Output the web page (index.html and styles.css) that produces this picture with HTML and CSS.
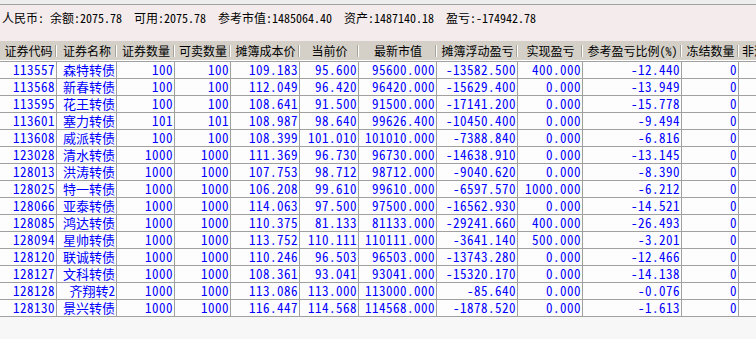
FILE: index.html
```html
<!DOCTYPE html>
<html lang="zh-CN">
<head>
<meta charset="utf-8">
<title>资金持仓</title>
<link rel="stylesheet" href="styles.css">
</head>
<body>
<div class="app">
  <div class="strip"></div>
  <div class="summary">人民币: 余额:2075.78  可用:2075.78  参考市值:1485064.40  资产:1487140.18  盈亏:-174942.78</div>
  <table class="grid">
    <colgroup>
      <col class="w57"><col class="w60"><col class="w58"><col class="w56"><col class="w69"><col class="w59"><col class="w78"><col class="w81"><col class="w65"><col class="w99"><col class="w57"><col class="w66">
    </colgroup>
    <thead>
      <tr><th>证券代码</th><th>证券名称</th><th>证券数量</th><th>可卖数量</th><th>摊簿成本价</th><th>当前价</th><th>最新市值</th><th>摊簿浮动盈亏</th><th>实现盈亏</th><th>参考盈亏比例(%)</th><th>冻结数量</th><th class="last">非流通数量</th></tr>
    </thead>
    <tbody>
      <tr><td>113557</td><td class="nm">森特转债</td><td>100</td><td>100</td><td>109.183</td><td>95.600</td><td>95600.000</td><td>-13582.500</td><td>400.000</td><td>-12.440</td><td>0</td><td></td></tr>
      <tr><td>113568</td><td class="nm">新春转债</td><td>100</td><td>100</td><td>112.049</td><td>96.420</td><td>96420.000</td><td>-15629.400</td><td>0.000</td><td>-13.949</td><td>0</td><td></td></tr>
      <tr><td>113595</td><td class="nm">花王转债</td><td>100</td><td>100</td><td>108.641</td><td>91.500</td><td>91500.000</td><td>-17141.200</td><td>0.000</td><td>-15.778</td><td>0</td><td></td></tr>
      <tr><td>113601</td><td class="nm">塞力转债</td><td>101</td><td>101</td><td>108.987</td><td>98.640</td><td>99626.400</td><td>-10450.400</td><td>0.000</td><td>-9.494</td><td>0</td><td></td></tr>
      <tr><td>113608</td><td class="nm">威派转债</td><td>100</td><td>100</td><td>108.399</td><td>101.010</td><td>101010.000</td><td>-7388.840</td><td>0.000</td><td>-6.816</td><td>0</td><td></td></tr>
      <tr><td>123028</td><td class="nm">清水转债</td><td>1000</td><td>1000</td><td>111.369</td><td>96.730</td><td>96730.000</td><td>-14638.910</td><td>0.000</td><td>-13.145</td><td>0</td><td></td></tr>
      <tr><td>128013</td><td class="nm">洪涛转债</td><td>1000</td><td>1000</td><td>107.753</td><td>98.712</td><td>98712.000</td><td>-9040.620</td><td>0.000</td><td>-8.390</td><td>0</td><td></td></tr>
      <tr><td>128025</td><td class="nm">特一转债</td><td>1000</td><td>1000</td><td>106.208</td><td>99.610</td><td>99610.000</td><td>-6597.570</td><td>1000.000</td><td>-6.212</td><td>0</td><td></td></tr>
      <tr><td>128066</td><td class="nm">亚泰转债</td><td>1000</td><td>1000</td><td>114.063</td><td>97.500</td><td>97500.000</td><td>-16562.930</td><td>0.000</td><td>-14.521</td><td>0</td><td></td></tr>
      <tr><td>128085</td><td class="nm">鸿达转债</td><td>1000</td><td>1000</td><td>110.375</td><td>81.133</td><td>81133.000</td><td>-29241.660</td><td>400.000</td><td>-26.493</td><td>0</td><td></td></tr>
      <tr><td>128094</td><td class="nm">星帅转债</td><td>1000</td><td>1000</td><td>113.752</td><td>110.111</td><td>110111.000</td><td>-3641.140</td><td>500.000</td><td>-3.201</td><td>0</td><td></td></tr>
      <tr><td>128120</td><td class="nm">联诚转债</td><td>1000</td><td>1000</td><td>110.246</td><td>96.503</td><td>96503.000</td><td>-13743.280</td><td>0.000</td><td>-12.466</td><td>0</td><td></td></tr>
      <tr><td>128127</td><td class="nm">文科转债</td><td>1000</td><td>1000</td><td>108.361</td><td>93.041</td><td>93041.000</td><td>-15320.170</td><td>0.000</td><td>-14.138</td><td>0</td><td></td></tr>
      <tr><td>128128</td><td class="nm">齐翔转2</td><td>1000</td><td>1000</td><td>113.086</td><td>113.000</td><td>113000.000</td><td>-85.640</td><td>0.000</td><td>-0.076</td><td>0</td><td></td></tr>
      <tr><td>128130</td><td class="nm">景兴转债</td><td>1000</td><td>1000</td><td>116.447</td><td>114.568</td><td>114568.000</td><td>-1878.520</td><td>0.000</td><td>-1.613</td><td>0</td><td></td></tr>
    </tbody>
  </table>
</div>
</body>
</html>
```

FILE: styles.css
```css
html, body {
  margin: 0;
  padding: 0;
}
body {
  background: #f7f7f7;
  overflow: hidden;
  font-family: "Noto Sans Mono CJK SC", "Noto Sans CJK SC", "DejaVu Sans Mono", monospace;
}
.app {
  width: 756px;
  height: 339px;
  overflow: hidden;
}
.strip {
  height: 4px;
  background: #eeeeee;
  border-bottom: 1px solid #a0a0a0;
}
.summary {
  box-sizing: border-box;
  height: 36px;
  padding: 6px 0 0 2px;
  background: #f4ecec;
  color: #000;
  font-size: 12px;
  line-height: 14px;
  white-space: pre;
}
.grid {
  border-collapse: separate;
  border-spacing: 0;
  table-layout: fixed;
  width: 805px;
}
.w56 { width: 56px; }
.w57 { width: 57px; }
.w58 { width: 58px; }
.w59 { width: 59px; }
.w60 { width: 60px; }
.w65 { width: 65px; }
.w66 { width: 66px; }
.w69 { width: 69px; }
.w78 { width: 78px; }
.w81 { width: 81px; }
.w99 { width: 99px; }
.grid th {
  position: relative;
  height: 19px;
  padding: 0;
  background: #d4d0c8;
  border-bottom: 1px solid #ffffff;
  color: #000;
  font-size: 12px;
  font-weight: normal;
  line-height: 19px;
  text-align: center;
  white-space: nowrap;
}
.grid th.last {
  text-align: left;
  padding-left: 3px;
}
.grid th::after {
  content: "";
  position: absolute;
  right: 1px;
  top: 4px;
  bottom: 3px;
  width: 1px;
  background: #a8a49c;
  box-shadow: 1px 0 0 #ffffff;
}
.grid td {
  height: 16px;
  padding: 0 1px 0 0;
  background: #fdfdfd;
  border-right: 1px solid #a0a0a0;
  border-bottom: 1px solid #a0a0a0;
  color: #0000ff;
  font-size: 13px;
  letter-spacing: 0.5px;
  line-height: 16px;
  text-align: right;
  white-space: nowrap;
}
.grid tbody tr:first-child td {
  border-top: 1px solid #a0a0a0;
}
.grid td.nm {
  letter-spacing: 0;
}
```
